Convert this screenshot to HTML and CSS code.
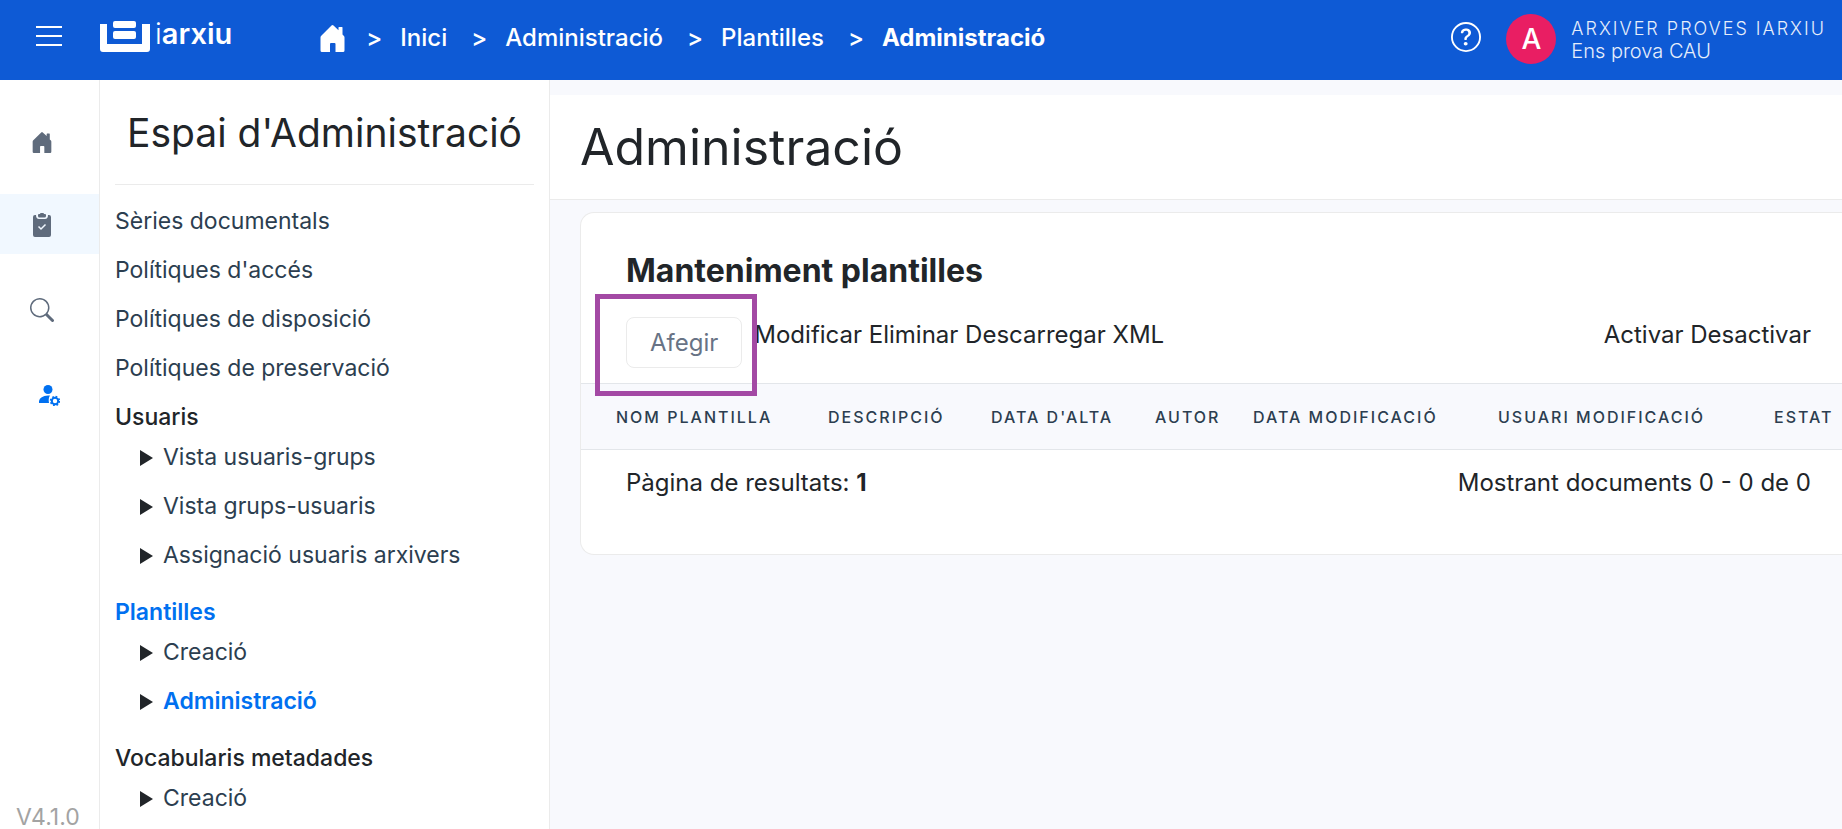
FILE: index.html
```html
<!DOCTYPE html>
<html lang="ca">
<head>
<meta charset="utf-8">
<title>iArxiu - Administració de plantilles</title>
<link rel="stylesheet" href="styles.css">
</head>
<body>
<header class="topbar">
  <button class="icon-button" type="button" aria-label="Menú">
    <svg width="26" height="22" viewBox="0 0 26 22" stroke="currentColor" stroke-width="2" fill="none"><path d="M0 2h26M0 11h26M0 20h26"/></svg>
  </button>
  <a class="brand" href="#">
    <svg width="50" height="31" viewBox="0 0 50 31" fill="currentColor"><path d="M0 3h7v20h35V3h8v25q0 3-3 3H3q-3 0-3-3z"/><rect x="13" y="0" width="23" height="7" rx="2"/><rect x="13" y="10" width="23" height="8" rx="2"/></svg>
    <span class="brand-name"><span class="brand-thin">i</span>arxiu</span>
  </a>
  <nav class="breadcrumb" aria-label="Ruta">
    <a class="crumb-home" href="#" aria-label="Portada"><svg width="25" height="27" viewBox="0 0 24 27" fill="currentColor"><path d="M11 .6q1-1 2 0l5 4.700V2.500q0-.5.5-.5h3q.5 0 .5.500v7l1.500 1.500q.5.5.5 1.500V25.500q0 1.500-1.500 1.500H15v-8q0-1-1-1h-3.500q-1 0-1 1v8h-8Q0 27 0 25.500V12.500q0-1 .5-1.500z"/></svg></a>
    <span class="sep">&gt;</span><a href="#">Inici</a>
    <span class="sep">&gt;</span><a href="#">Administració</a>
    <span class="sep">&gt;</span><a href="#">Plantilles</a>
    <span class="sep">&gt;</span><a class="current" href="#">Administració</a>
  </nav>
  <div class="account">
    <button class="icon-button" type="button" aria-label="Ajuda">
      <svg width="30" height="30" viewBox="0 0 16 16" fill="currentColor"><path d="M8 15A7 7 0 1 1 8 1a7 7 0 0 1 0 14m0 1A8 8 0 1 0 8 0a8 8 0 0 0 0 16"/><path d="M5.255 5.786a.237.237 0 0 0 .241.247h.825c.138 0 .248-.113.266-.25.09-.656.54-1.134 1.342-1.134.686 0 1.314.343 1.314 1.168 0 .635-.374.927-.965 1.371-.673.489-1.206 1.060-1.168 1.987l.003.217a.25.25 0 0 0 .25.246h.811a.25.25 0 0 0 .25-.25v-.105c0-.718.273-.927 1.010-1.486.609-.463 1.244-.977 1.244-2.056 0-1.511-1.276-2.241-2.673-2.241-1.267 0-2.655.590-2.750 2.286m1.557 5.763c0 .533.425.927 1.010.927.609 0 1.028-.394 1.028-.927 0-.552-.420-.940-1.029-.940-.584 0-1.009.388-1.009.940"/></svg>
    </button>
    <span class="avatar">A</span>
    <div class="user">
      <span class="user-name">ARXIVER PROVES IARXIU</span>
      <span class="user-org">Ens prova CAU</span>
    </div>
  </div>
</header>
<div class="layout">
  <nav class="rail" aria-label="Seccions">
    <a class="rail-link" href="#" aria-label="Inici"><svg width="24" height="21" viewBox="0 0 24 27" fill="currentColor"><path d="M11 .6q1-1 2 0l5 4.700V2.500q0-.5.5-.5h3q.5 0 .5.500v7l1.500 1.500q.5.5.5 1.500V25.500q0 1.500-1.500 1.500H15v-8q0-1-1-1h-3.500q-1 0-1 1v8h-8Q0 27 0 25.500V12.500q0-1 .5-1.500z"/></svg></a>
    <a class="rail-link active" href="#" aria-label="Tasques"><svg width="24" height="24" viewBox="0 0 24 24"><path fill="currentColor" d="M5 2h1q0 4 3 4h6q3 0 3-4h1q2 0 2 2v18q0 2-2 2H5q-2 0-2-2V4q0-2 2-2z"/><path fill="currentColor" d="M8 2q0-1 1-1h1q0-1 1-1h2q1 0 1 1h1q1 0 1 1v1q0 1.500-1.500 1.500h-5Q8 4.500 8 3z"/><path fill="none" stroke="#f1f8ff" stroke-width="1.500" d="M8.500 13.500l2.500 2.500 4.500-4.500"/></svg></a>
    <a class="rail-link" href="#" aria-label="Cerca"><svg width="24" height="24" viewBox="0 0 16 16" fill="currentColor"><path d="M11.742 10.344a6.500 6.500 0 1 0-1.397 1.398h-.001q.044.060.098.115l3.850 3.850a1 1 0 0 0 1.415-1.414l-3.850-3.850a1 1 0 0 0-.115-.100zM12 6.500a5.500 5.500 0 1 1-11 0 5.500 5.500 0 0 1 11 0"/></svg></a>
    <a class="rail-link selected" href="#" aria-label="Administració"><svg width="21" height="21" viewBox="0 0 21 21" fill="currentColor"><circle cx="9" cy="4.500" r="4.500"/><path d="M0 18v-2q1-5 9-5.500h2q-2 3-1 7.500z"/><circle cx="16" cy="16" r="3.200" fill="none" stroke="currentColor" stroke-width="2"/><circle cx="16" cy="16" r="4.500" fill="none" stroke="currentColor" stroke-width="1.500" stroke-dasharray="1.770 1.770"/></svg></a>
    <span class="version">V4.1.0</span>
  </nav>
  <aside class="panel">
    <h2 class="panel-title">Espai d'Administració</h2>
    <ul class="menu">
      <li><a href="#">Sèries documentals</a></li>
      <li><a href="#">Polítiques d'accés</a></li>
      <li><a href="#">Polítiques de disposició</a></li>
      <li><a href="#">Polítiques de preservació</a></li>
    </ul>
    <h3 class="group">Usuaris</h3>
    <ul class="menu sub">
      <li><a href="#">Vista usuaris-grups</a></li>
      <li><a href="#">Vista grups-usuaris</a></li>
      <li><a href="#">Assignació usuaris arxivers</a></li>
    </ul>
    <h3 class="group on">Plantilles</h3>
    <ul class="menu sub">
      <li><a href="#">Creació</a></li>
      <li><a class="on" href="#">Administració</a></li>
    </ul>
    <h3 class="group">Vocabularis metadades</h3>
    <ul class="menu sub">
      <li><a href="#">Creació</a></li>
    </ul>
  </aside>
  <main class="content">
    <div class="page-head"><h1>Administració</h1></div>
    <section class="card">
      <h2 class="card-title">Manteniment plantilles</h2>
      <div class="toolbar">
        <div class="tools">
          <span class="marked"><button class="add" type="button">Afegir</button></span>
          <span>Modificar Eliminar Descarregar XML</span>
        </div>
        <span>Activar Desactivar</span>
      </div>
      <table class="grid">
        <colgroup><col class="w-name"><col class="w-desc"><col class="w-start"><col class="w-author"><col class="w-mod"><col class="w-user"><col></colgroup>
        <thead><tr><th>NOM PLANTILLA</th><th>DESCRIPCIÓ</th><th>DATA D'ALTA</th><th>AUTOR</th><th>DATA MODIFICACIÓ</th><th>USUARI MODIFICACIÓ</th><th>ESTAT</th></tr></thead>
      </table>
      <div class="results"><span>Pàgina de resultats: <b>1</b></span><span>Mostrant documents 0 - 0 de 0</span></div>
    </section>
  </main>
</div>
</body>
</html>
```
FILE: styles.css
```css
* { box-sizing: border-box; }
body {
  margin: 0;
  height: 100vh;
  overflow: hidden;
  display: flex;
  flex-direction: column;
  font-family: Inter, "Open Sans", sans-serif;
  font-size: 24px;
  line-height: 32px;
  color: #212529;
  background: #f8f9fd;
}
a { color: inherit; text-decoration: none; }
svg { display: block; }
h1, h2, h3, ul { margin: 0; padding: 0; font-weight: 400; }
ul { list-style: none; }
.icon-button { padding: 0; border: 0; background: none; color: inherit; }

.topbar {
  display: flex;
  align-items: center;
  flex: none;
  height: 80px;
  padding: 0 16px 0 36px;
  color: #fff;
  background: #0e5ad5;
}
.topbar > .icon-button { padding-bottom: 8px; }
.brand { display: flex; gap: 5px; margin-left: 38px; padding-bottom: 8px; }
.brand-name { font-size: 29px; line-height: 26px; font-weight: 600; }
.brand-thin { font-weight: 300; }
.breadcrumb { display: flex; align-items: center; margin-left: 88px; padding-bottom: 4px; font-weight: 500; }
.breadcrumb .current { font-weight: 700; }
.sep { margin: 0 18px 0 24px; }
.crumb-home + .sep { margin-left: 21px; }
.account { display: flex; align-items: center; margin-left: auto; padding-bottom: 2px; }
.account .icon-button { margin-right: 25px; padding-bottom: 4px; }
.avatar {
  width: 50px;
  height: 50px;
  margin-right: 15px;
  border-radius: 50%;
  font-size: 28px;
  line-height: 50px;
  font-weight: 500;
  text-align: center;
  background: #e91e63;
}
.user { display: flex; flex-direction: column; padding-top: 2px; font-size: 20px; line-height: 23px; font-weight: 300; color: #e6eefb; }
.user-name { font-size: 18px; letter-spacing: 2px; }

.layout { display: flex; flex: 1; min-height: 0; }
.rail {
  display: flex;
  flex-direction: column;
  gap: 25px;
  flex: none;
  width: 100px;
  padding-top: 35px;
  border-right: 1px solid #ebebeb;
  color: #5f6b7c;
  background: #fff;
}
.rail-link { display: flex; align-items: center; height: 60px; padding: 2px 0 0 30px; }
.rail-link:first-child { height: 54px; padding-top: 0; }
.rail-link.active { background: #f1f8ff; }
.rail-link.selected { padding-left: 39px; color: #0070f0; }
.version { margin: auto 0 0 16px; color: #a3a3a3; font-size: 23px; line-height: 24px; }

.panel {
  flex: none;
  width: 450px;
  padding: 0 15px;
  border-right: 1px solid #ebebeb;
  font-size: 23px;
  background: #fff;
}
.panel-title {
  padding: 32px 0 31px;
  margin-bottom: 12px;
  border-bottom: 1px solid #ebebeb;
  font-size: 39px;
  line-height: 41px;
  text-align: center;
}
.menu li { height: 49px; line-height: 49px; color: #2c3e50; }
.group { margin-top: 8px; font-size: 23px; line-height: 32px; font-weight: 500; }
.group.on, .menu .on { color: #0070f0; font-weight: 600; }
.sub { padding: 0 0 8px 25px; }
.sub li { display: flex; align-items: center; gap: 10px; }
.sub li::before { content: ""; border: 8px solid transparent; border-left: 13px solid #212529; border-right: 0; }

.content { flex: 1; min-width: 0; padding-top: 15px; }
.page-head { padding: 20px 30px; height: 105px; border-bottom: 1px solid #ebebeb; background: #fff; }
h1 { font-size: 50px; line-height: 64px; }
.card {
  margin: 12px 0 0 30px;
  padding-bottom: 55px;
  border: 1px solid #ebebeb;
  border-right: 0;
  border-radius: 14px 0 0 14px;
  background: #fff;
}
.card-title { padding: 38px 45px 0; font-size: 32px; line-height: 40px; font-weight: 700; }
.toolbar, .results { display: flex; justify-content: space-between; padding: 0 31px 0 45px; }
.toolbar { height: 92px; padding-top: 26px; line-height: 36px; }
.tools { display: flex; align-items: flex-start; gap: 12px; }
.marked { position: relative; display: block; }
.marked::after { content: ""; position: absolute; inset: -23px -15px -28px -31px; border: 5px solid #a349a4; }
.add {
  display: block;
  height: 51px;
  padding: 0 23px;
  border: 1px solid #ebebeb;
  border-radius: 8px;
  font: inherit;
  color: #687385;
  background: #fff;
}
.grid { width: 100%; table-layout: fixed; border-collapse: collapse; }
.grid th {
  height: 66px;
  padding: 0 0 0 35px;
  border: solid #e3e6ea;
  border-width: 1px 0;
  font-size: 16px;
  line-height: 24px;
  font-weight: 500;
  letter-spacing: 2px;
  text-align: left;
  white-space: nowrap;
  color: #2c3e50;
  background: #f8f9fd;
}
.w-name { width: 212px; }
.w-desc { width: 163px; }
.w-start { width: 164px; }
.w-author { width: 98px; }
.w-mod { width: 245px; }
.w-user { width: 276px; }
.results { padding-top: 17px; }
```
